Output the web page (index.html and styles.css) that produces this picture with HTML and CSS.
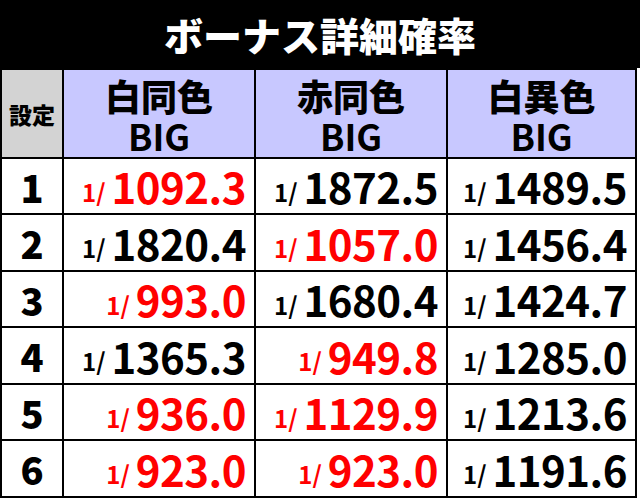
FILE: index.html
```html
<!DOCTYPE html>
<html lang="ja">
<head>
<meta charset="utf-8">
<link rel="stylesheet" href="styles.css">
</head>
<body>
<div class="title">ボーナス詳細確率</div>
<div class="grid">
  <div class="hd set">設定</div>
  <div class="hd col"><span class="l1">白同色</span><span class="l2">BIG</span></div>
  <div class="hd col"><span class="l1">赤同色</span><span class="l2">BIG</span></div>
  <div class="hd col"><span class="l1">白異色</span><span class="l2">BIG</span></div>

  <div class="num">1</div>
  <div class="val red"><span class="pre">1/</span><span class="big">1092.3</span></div>
  <div class="val"><span class="pre">1/</span><span class="big">1872.5</span></div>
  <div class="val"><span class="pre">1/</span><span class="big">1489.5</span></div>

  <div class="num">2</div>
  <div class="val"><span class="pre">1/</span><span class="big">1820.4</span></div>
  <div class="val red"><span class="pre">1/</span><span class="big">1057.0</span></div>
  <div class="val"><span class="pre">1/</span><span class="big">1456.4</span></div>

  <div class="num">3</div>
  <div class="val red"><span class="pre">1/</span><span class="big">993.0</span></div>
  <div class="val"><span class="pre">1/</span><span class="big">1680.4</span></div>
  <div class="val"><span class="pre">1/</span><span class="big">1424.7</span></div>

  <div class="num">4</div>
  <div class="val"><span class="pre">1/</span><span class="big">1365.3</span></div>
  <div class="val red"><span class="pre">1/</span><span class="big">949.8</span></div>
  <div class="val"><span class="pre">1/</span><span class="big">1285.0</span></div>

  <div class="num">5</div>
  <div class="val red"><span class="pre">1/</span><span class="big">936.0</span></div>
  <div class="val red"><span class="pre">1/</span><span class="big">1129.9</span></div>
  <div class="val"><span class="pre">1/</span><span class="big">1213.6</span></div>

  <div class="num">6</div>
  <div class="val red"><span class="pre">1/</span><span class="big">923.0</span></div>
  <div class="val red"><span class="pre">1/</span><span class="big">923.0</span></div>
  <div class="val"><span class="pre">1/</span><span class="big">1191.6</span></div>
</div>
</body>
</html>
```
FILE: styles.css
```css
html, body {
  margin: 0;
  padding: 0;
  background: #ffffff;
  width: 640px;
  height: 500px;
  overflow: hidden;
  font-family: "Noto Sans CJK JP", "Noto Sans", sans-serif;
  font-weight: 900;
  color: #000;
}
.title {
  height: 68px;
  background: #000;
  color: #fff;
  font-size: 39px;
  line-height: 68px;
  text-align: center;
}
.grid {
  display: grid;
  width: 637px;
  grid-template-columns: 60px 190px 190px 187px;
  grid-template-rows: 87px 54px 55px 54px 55px 54px 55px;
  gap: 2px;
  padding: 2px 0 2px 2px;
  box-sizing: border-box;
  border-right: 2px solid #000;
  background: #000;
}
.hd {
  display: flex;
  flex-direction: column;
  align-items: center;
  justify-content: center;
  text-align: center;
}
.set {
  background: #d3d3d3;
  font-size: 23px;
}
.col {
  background: #c8c8ff;
  font-size: 36px;
  padding-top: 2px;
}
.col .l1 {
  line-height: 40px;
}
.col .l2 {
  line-height: 40px;
  font-size: 36px;
  font-weight: 700;
}
.num {
  background: #fff;
  display: flex;
  align-items: center;
  justify-content: center;
  font-size: 38px;
}
.val {
  background: #fff;
  display: flex;
  align-items: center;
  justify-content: flex-end;
  padding-right: 8px;
  font-weight: 700;
}
.val .pre {
  font-size: 24px;
  margin-right: 6px;
  margin-top: 10px;
}
.val .big {
  font-size: 42px;
  line-height: 1;
  letter-spacing: -0.5px;
}
.red {
  color: #ff0000;
}
```
